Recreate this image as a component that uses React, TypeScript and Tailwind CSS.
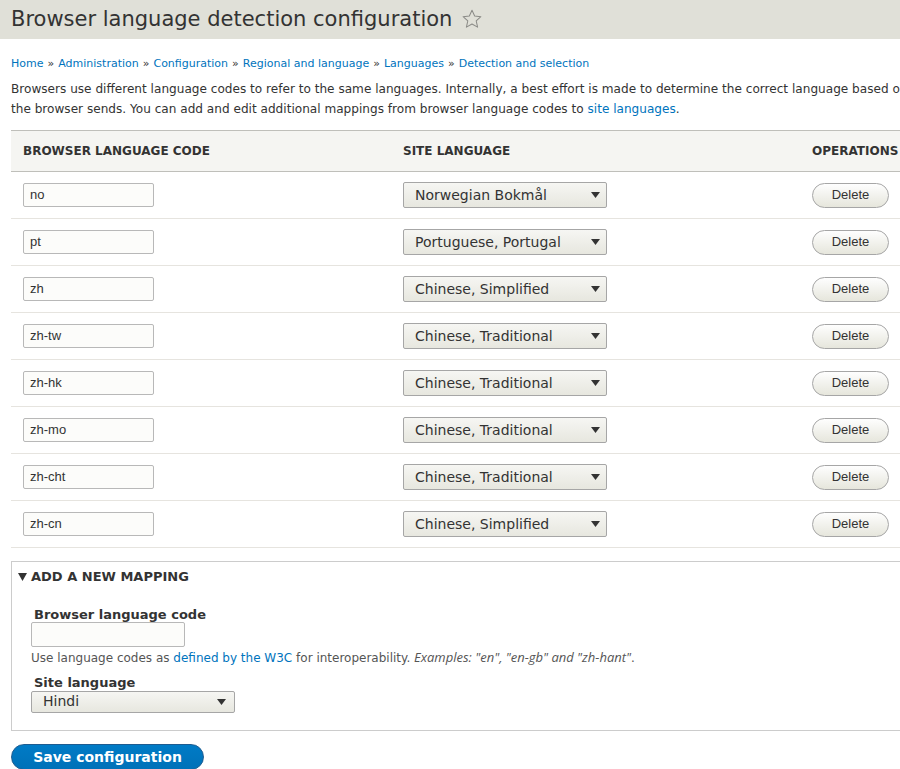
import React from 'react'

interface Mapping {
  code: string
  language: string
}

const mappings: Mapping[] = [
  { code: 'no', language: 'Norwegian Bokmål' },
  { code: 'pt', language: 'Portuguese, Portugal' },
  { code: 'zh', language: 'Chinese, Simplified' },
  { code: 'zh-tw', language: 'Chinese, Traditional' },
  { code: 'zh-hk', language: 'Chinese, Traditional' },
  { code: 'zh-mo', language: 'Chinese, Traditional' },
  { code: 'zh-cht', language: 'Chinese, Traditional' },
  { code: 'zh-cn', language: 'Chinese, Simplified' },
]

const crumbs = ['Home', 'Administration', 'Configuration', 'Regional and language', 'Languages', 'Detection and selection']

const sans = "font-['DejaVu_Sans','Liberation_Sans',sans-serif]"

// Small down-pointing triangle used by the fake select boxes
const Caret = () => (
  <svg width="9" height="6" viewBox="0 0 9 6" className="shrink-0">
    <path d="M0 0h9L4.5 6z" fill="#333" />
  </svg>
)

const SelectBox: React.FC<{ value: string; className?: string }> = ({ value, className = '' }) => (
  <div
    className={`flex items-center justify-between rounded-[2px] border border-[#a6a6a6] bg-linear-to-b from-[#f6f6f3] to-[#e7e7df] text-[14px] text-[#333] ${className}`}
  >
    <span className="truncate">{value}</span>
    <Caret />
  </div>
)

export default function App() {
  return (
    <div className={`min-h-[769px] w-[900px] overflow-hidden bg-white ${sans} text-[13px] text-[#333]`}>
      {/* Page title band */}
      <div className="flex h-[39px] items-center bg-[#e0e0d8] pl-[11px]">
        <h1 className="text-[21px] leading-none text-[#333]">Browser language detection configuration</h1>
        <svg width="22" height="22" viewBox="0 0 24 24" className="ml-[9px] mt-[-1px]">
          <path
            d="M12 2.5l2.9 6.3 6.8.7-5.1 4.6 1.5 6.8L12 17.4l-6.1 3.5 1.5-6.8-5.1-4.6 6.8-.7z"
            fill="none"
            stroke="#8a8a86"
            strokeWidth="1.1"
            strokeLinejoin="round"
          />
        </svg>
      </div>

      <div className="w-[920px] pl-[11px]">
        {/* Breadcrumb */}
        <div className="mt-[18px] text-[11px] leading-[14px] text-[#333]">
          {crumbs.map((c, i) => (
            <React.Fragment key={c}>
              {i > 0 && <span className="mx-[4px]">»</span>}
              <a className="text-[#0074bd]">{c}</a>
            </React.Fragment>
          ))}
        </div>

        <p className="mt-[8px] w-[900px] text-[12.1px] leading-[20px]">
          Browsers use different language codes to refer to the same languages. Internally, a best effort is made to
          determine the correct language based on the browser sends. You can add and edit additional mappings from
          browser language codes to <a className="text-[#0074bd]">site languages</a>.
        </p>

        {/* Mapping table */}
        <div className="mt-[11px] w-[909px]">
          <div className="grid h-[42px] grid-cols-[380px_409px_1fr] items-center border-y border-[#bfbfba] bg-[#f5f5f2] text-[12px] font-bold uppercase text-[#333]">
            <div className="pl-[12px]">Browser language code</div>
            <div className="pl-[12px]">Site language</div>
            <div className="pl-[12px]">Operations</div>
          </div>
          {mappings.map((m) => (
            <div
              key={m.code}
              className="grid h-[47px] grid-cols-[380px_409px_1fr] items-center border-b border-[#e6e4df]"
            >
              <div className="pl-[12px]">
                <div className="flex h-[24px] w-[131px] items-center rounded-[2px] border border-[#b8b8b8] bg-[#fcfcfa] pl-[6px] font-['Liberation_Sans',Arial,sans-serif] text-[13px] text-[#333]">
                  {m.code}
                </div>
              </div>
              <div className="pl-[12px]">
                <SelectBox value={m.language} className="h-[26px] w-[204px] pl-[11px] pr-[6px]" />
              </div>
              <div className="pl-[12px]">
                <button className="flex h-[25px] w-[77px] items-center justify-center rounded-full border border-[#a6a6a6] bg-linear-to-b from-[#fefefe] to-[#e6e6dc] font-['Liberation_Sans',Arial,sans-serif] text-[13px] text-[#333]">
                  Delete
                </button>
              </div>
            </div>
          ))}
        </div>

        {/* Add new mapping fieldset */}
        <fieldset className="mt-[13px] h-[170px] w-[909px] border border-[#ccc] px-[19px]">
          <div className="mt-[5px] ml-[-13px] flex items-center gap-[4px] text-[13px] font-bold uppercase">
            <svg width="9" height="8" viewBox="0 0 9 8">
              <path d="M0 0h9L4.5 8z" fill="#333" />
            </svg>
            <span>Add a new mapping</span>
          </div>

          <div className="mt-[21px]">
            <label className="block pl-[3px] text-[13px] font-bold leading-[14px]">Browser language code</label>
            <div className="h-[25px] w-[154px] rounded-[2px] border border-[#b8b8b8] bg-[#fcfcfa]" />
            <div className="mt-[2px] text-[12px] leading-[16px] text-[#555]">
              Use language codes as <a className="text-[#0074bd]">defined by the W3C</a> for interoperability.{' '}
              <em className="font-['Open_Sans','Noto_Sans',sans-serif] text-[13px]">
                Examples: "en", "en-gb" and "zh-hant"
              </em>
              .
            </div>
          </div>

          <div className="mt-[8px]">
            <label className="block pl-[3px] text-[13px] font-bold leading-[17px]">Site language</label>
            <SelectBox value="Hindi" className="h-[22px] w-[204px] pl-[11px] pr-[8px]" />
          </div>
        </fieldset>

        <button className="mt-[13px] flex h-[26px] w-[193px] items-center justify-center rounded-full border border-[#1e5c90] bg-linear-to-b from-[#007bc6] to-[#0071b8] text-[14px] font-bold text-white">
          Save configuration
        </button>
      </div>
    </div>
  )
}
